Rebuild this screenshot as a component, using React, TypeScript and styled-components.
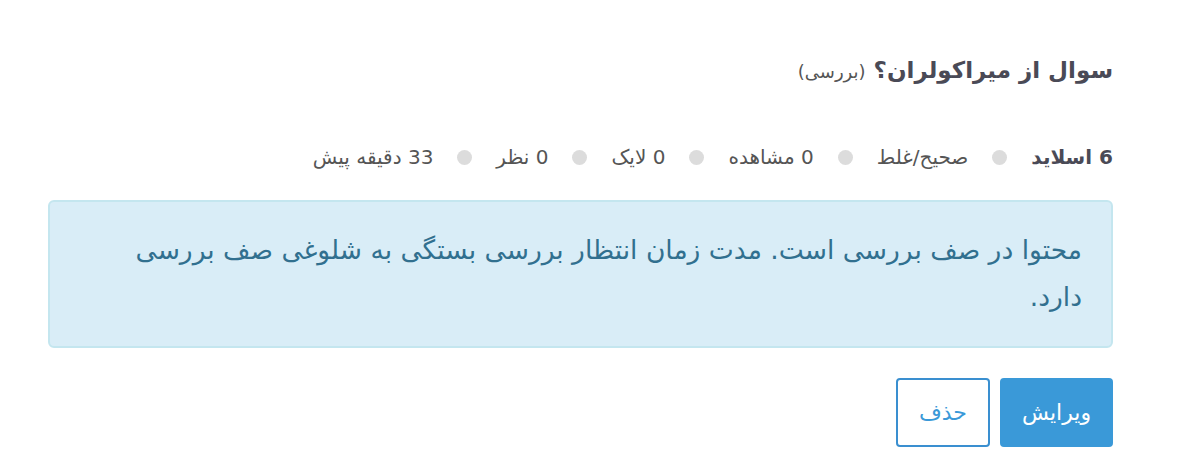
import React from 'react';
import styled, { createGlobalStyle } from 'styled-components';

const GlobalStyle = createGlobalStyle`
  body {
    margin: 0;
    background: #ffffff;
    font-family: "DejaVu Sans", "Noto Sans", sans-serif;
  }
`;

const Page = styled.div`
  direction: rtl;
  padding: 52px 69px 0 48px;
`;

const Title = styled.h2`
  margin: 0;
  font-size: 23px;
  font-weight: 700;
  color: #4a4a56;
  line-height: 36px;
  display: flex;
  align-items: baseline;
  gap: 8px;
`;

const Status = styled.span`
  font-size: 18px;
  font-weight: 400;
  color: #555;
`;

const Meta = styled.ul`
  list-style: none;
  margin: 52px 0 0;
  padding: 0;
  display: flex;
  align-items: center;
  gap: 24px;
  font-size: 20px;
  color: #555;
  line-height: 30px;
`;

const MetaItem = styled.li<{ $strong?: boolean }>`
  display: flex;
  align-items: center;
  gap: 24px;
  font-weight: ${(p) => (p.$strong ? 700 : 400)};
  color: ${(p) => (p.$strong ? '#4a4a56' : '#555')};
`;

const Dot = styled.span`
  width: 15px;
  height: 15px;
  border-radius: 50%;
  background: #dcdcdc;
`;

const Alert = styled.div`
  margin-top: 28px;
  background: #d9edf7;
  border: 2px solid #c4e6ef;
  border-radius: 6px;
  color: #31708f;
  font-size: 26.5px;
  line-height: 47px;
  padding: 24px 29px 26px 50px;
`;

const Actions = styled.div`
  margin-top: 30px;
  display: flex;
  gap: 10px;
`;

const Button = styled.button<{ $primary?: boolean }>`
  height: 69px;
  padding: 0;
  width: ${(p) => (p.$primary ? '113px' : '94px')};
  border-radius: 4px;
  font-family: inherit;
  font-size: 22px;
  cursor: pointer;
  border: 2px solid ${(p) => (p.$primary ? '#3a99d8' : '#3a8fd0')};
  background: ${(p) => (p.$primary ? '#3a99d8' : '#ffffff')};
  color: ${(p) => (p.$primary ? '#ffffff' : '#3a99d8')};
`;

const meta = ['صحیح/غلط', '0 مشاهده', '0 لایک', '0 نظر', '33 دقیقه پیش'];

export default function App() {
  return (
    <>
      <GlobalStyle />
      <Page>
        <Title>
          سوال از میراکولران؟
          <Status>(بررسی)</Status>
        </Title>
        <Meta>
          <MetaItem $strong>6 اسلاید</MetaItem>
          {meta.map((m) => (
            <MetaItem key={m}>
              <Dot />
              {m}
            </MetaItem>
          ))}
        </Meta>
        <Alert>
          محتوا در صف بررسی است. مدت زمان انتظار بررسی بستگی به شلوغی صف بررسی دارد.
        </Alert>
        <Actions>
          <Button $primary>ویرایش</Button>
          <Button>حذف</Button>
        </Actions>
      </Page>
    </>
  );
}
